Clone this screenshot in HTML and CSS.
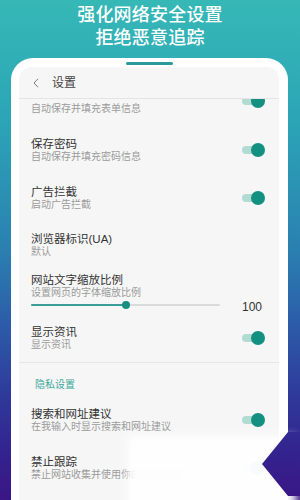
FILE: index.html
```html
<!DOCTYPE html>
<html lang="zh-CN">
<head>
<meta charset="utf-8">
<title>设置</title>
<link rel="stylesheet" href="styles.css">
</head>
<body>
<div class="page">
  <h1 class="headline"><span>强化网络安全设置</span><span>拒绝恶意追踪</span></h1>
  <div class="phone">
    <div class="notch"></div>
    <div class="screen">
      <div class="appbar">
        <svg class="back" width="6" height="10" viewBox="0 0 6 10"><path d="M5 0.8 L1 5 L5 9.2" fill="none" stroke="#7a7a7a" stroke-width="1"/></svg>
        <span class="appbar-title">设置</span>
      </div>
      <div class="list">
        <div class="item first">
          <div class="text"><div class="sub">自动保存并填充表单信息</div></div>
          <div class="toggle"></div>
        </div>
        <div class="item">
          <div class="text"><div class="title">保存密码</div><div class="sub">自动保存并填充密码信息</div></div>
          <div class="toggle"></div>
        </div>
        <div class="item">
          <div class="text"><div class="title">广告拦截</div><div class="sub">启动广告拦截</div></div>
          <div class="toggle"></div>
        </div>
        <div class="item plain">
          <div class="text"><div class="title">浏览器标识(UA)</div><div class="sub">默认</div></div>
        </div>
        <div class="item slider-item">
          <div class="text"><div class="title">网站文字缩放比例</div><div class="sub">设置网页的字体缩放比例</div></div>
          <div class="slider-row">
            <div class="slider"><div class="fill" style="width:50%"></div><div class="thumb"></div></div>
            <div class="value">100</div>
          </div>
        </div>
        <div class="item last">
          <div class="text"><div class="title">显示资讯</div><div class="sub">显示资讯</div></div>
          <div class="toggle"></div>
        </div>
        <div class="section">隐私设置</div>
        <div class="item">
          <div class="text"><div class="title">搜索和网址建议</div><div class="sub">在我输入时显示搜索和网址建议</div></div>
          <div class="toggle"></div>
        </div>
        <div class="item">
          <div class="text"><div class="title">禁止跟踪</div><div class="sub">禁止网站收集并使用你的浏览数据</div></div>
          <div class="toggle"></div>
        </div>
      </div>
    </div>
  </div>
  <div class="wm-blob"></div>
  <div class="wm-notch"></div>
</div>
</body>
</html>
```
FILE: styles.css
```css
:root {
  --bg: linear-gradient(180deg, #36b8b6 0px, #2ba4b6 125px, #2a80b1 250px, #2c59a8 330px, #2f3799 400px, #33248f 450px, #3a1585 500px);
}
* { box-sizing: border-box; }
html, body {
  margin: 0;
  padding: 0;
}
body {
  width: 300px;
  height: 500px;
  overflow: hidden;
  background: var(--bg);
  font-family: "Liberation Sans", "Noto Sans CJK SC", sans-serif;
}
.page {
  position: relative;
  width: 300px;
  height: 500px;
  overflow: hidden;
}
.headline {
  margin: 0;
  padding-top: 4px;
  display: flex;
  flex-direction: column;
  align-items: center;
  color: #ffffff;
  font-size: 18px;
  line-height: 23px;
  font-weight: 500;
  letter-spacing: 0.2px;
}
.phone {
  margin: 8px 12px 0 11px;
  height: 460px;
  background: #ffffff;
  border-radius: 22px 22px 0 0;
  padding: 4px 9px 0 8px;
  display: flex;
  flex-direction: column;
}
.notch {
  align-self: center;
  width: 47px;
  height: 3px;
  border-radius: 2px;
  background: #2a9a9c;
  margin-bottom: 2px;
}
.screen {
  flex: 1;
  background: #f6f6f6;
  border-radius: 12px 12px 0 0;
  display: flex;
  flex-direction: column;
  overflow: hidden;
}
.appbar {
  height: 32px;
  flex: none;
  border-bottom: 1px solid #e4e4e4;
  display: flex;
  align-items: center;
  padding-left: 14px;
}
.back { display: block; }
.appbar-title {
  margin-left: 13px;
  font-size: 12px;
  color: #444;
  line-height: 14px;
}
.list {
  flex: 1;
  overflow: hidden;
  display: flex;
  flex-direction: column;
}
.item {
  display: flex;
  align-items: center;
  padding: 11px 14px 11px 12px;
  flex: none;
}
.item.first {
  align-items: flex-start;
  margin-top: -5px;
  padding-top: 0;
}
.item.first .text { padding-top: 9px; }
.item.plain { padding-top: 10px; padding-bottom: 4px; }
.item.slider-item {
  flex-direction: column;
  align-items: stretch;
  padding-bottom: 4px;
}
.item.last { border-bottom: 1px solid #e6e6e6; }
.text { flex: 1; min-width: 0; }
.title {
  font-size: 11.5px;
  line-height: 14px;
  color: #333333;
  white-space: nowrap;
}
.sub {
  font-size: 10px;
  line-height: 12px;
  color: #9b9b9b;
  white-space: nowrap;
}
.toggle {
  position: relative;
  width: 23px;
  height: 14px;
  flex: none;
}
.toggle::before {
  content: "";
  position: absolute;
  left: 0;
  top: 3px;
  width: 20px;
  height: 8px;
  border-radius: 4px;
  background: #b2dbd4;
}
.toggle::after {
  content: "";
  position: absolute;
  right: 0;
  top: 0;
  width: 14px;
  height: 14px;
  border-radius: 50%;
  background: #13907f;
}
.slider-row {
  display: flex;
  align-items: flex-start;
  height: 10px;
  margin-top: 1px;
}
.slider {
  position: relative;
  width: 189px;
  height: 2px;
  margin-top: 4px;
  background: #dadada;
  border-radius: 1px;
}
.fill {
  height: 2px;
  background: #3c9d96;
  border-radius: 1px;
}
.thumb {
  position: absolute;
  left: 50%;
  top: -3px;
  width: 8px;
  height: 8px;
  margin-left: -4px;
  border-radius: 50%;
  background: #17907f;
}
.value {
  flex: 1;
  text-align: right;
  padding-right: 3px;
  font-size: 12px;
  line-height: 12px;
  color: #333;
  margin-top: 1px;
}
.section {
  padding: 15px 12px 4px 16px;
  font-size: 10px;
  line-height: 14px;
  color: #3fa89b;
  flex: none;
}
.wm-blob {
  position: absolute;
  left: 128px;
  top: 436px;
  width: 168px;
  height: 74px;
  background: #ffffff;
  filter: blur(4px);
  opacity: 0.97;
}
.wm-notch {
  position: absolute;
  left: 262px;
  top: 432px;
  width: 38px;
  height: 64px;
  background: var(--bg);
  background-size: 300px 500px;
  background-position: -262px -432px;
  clip-path: polygon(26px 0, 100% 0, 100% 100%, 26px 100%, 0 50%);
}
```
